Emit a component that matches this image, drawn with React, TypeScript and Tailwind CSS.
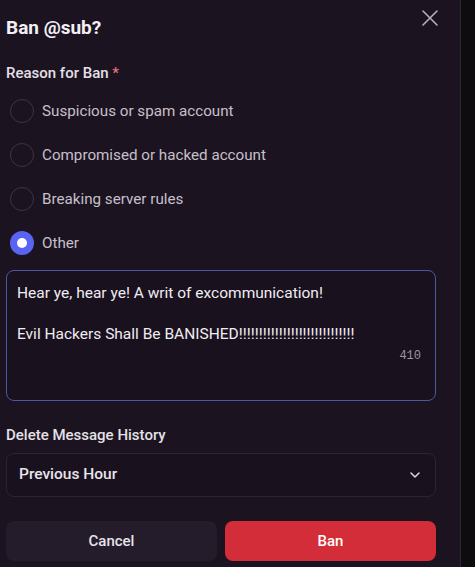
import { useState } from 'react';

const reasons = [
  'Suspicious or spam account',
  'Compromised or hacked account',
  'Breaking server rules',
  'Other',
];

export default function App() {
  const [selected, setSelected] = useState('Other');
  const [reason, setReason] = useState(
    'Hear ye, hear ye! A writ of excommunication!\n\nEvil Hackers Shall Be BANISHED!!!!!!!!!!!!!!!!!!!!!!!!!!!!!'
  );

  return (
    <div className="flex h-[567px] w-[475px] bg-[#0e0c0f]" style={{ fontFamily: 'Roboto, "Noto Sans", sans-serif' }}>
      <div className="relative flex w-[461px] flex-col border-r border-[#2e2833] bg-[#1c1321] pl-[6px] pr-[24px]">
        <button className="absolute right-[20px] top-[8px] text-[#b5afba]">
          <svg width="20" height="20" viewBox="0 0 20 20" fill="none" stroke="currentColor" strokeWidth="1.6" strokeLinecap="round">
            <path d="M3 3l14 14M17 3L3 17" />
          </svg>
        </button>

        <h1 className="mt-[15px] text-[19px] leading-[26px] font-bold text-[#f2f0f4]">Ban @sub?</h1>

        <div className="mt-[22px] text-[15px] leading-[20px] font-medium text-[#e4e1e7]">
          Reason for Ban <span className="text-[#e66d79]">*</span>
        </div>

        <div className="mt-[6px] flex flex-col">
          {reasons.map((r) => (
            <label key={r} className="flex h-[44px] cursor-pointer items-center gap-[8px] pl-[4px]" onClick={() => setSelected(r)}>
              {selected === r ? (
                <span className="flex h-[24px] w-[24px] items-center justify-center rounded-full bg-[#5865f2]">
                  <span className="h-[10px] w-[10px] rounded-full bg-white" />
                </span>
              ) : (
                <span className="h-[24px] w-[24px] rounded-full border border-[#3d3543]" />
              )}
              <span className="text-[15.2px] text-[#c6c0cb]">{r}</span>
            </label>
          ))}
        </div>

        <div className="relative mt-[5px] h-[131px] rounded-[8px] border border-[#4b58a6] bg-[#1a111f]">
          <textarea
            value={reason}
            onChange={(e) => setReason(e.target.value)}
            spellCheck={false}
            className="h-full w-full resize-none bg-transparent px-[10px] pt-[12px] text-[15.5px] leading-[20.5px] text-[#efedf1] outline-none"
          />
          <span className="absolute bottom-[35px] right-[14px] text-[12px] text-[#9b95a0]" style={{ fontFamily: '"Liberation Mono", monospace' }}>
            410
          </span>
        </div>

        <div className="mt-[24px] text-[15px] leading-[20px] font-medium text-[#e4e1e7]">Delete Message History</div>

        <div className="mt-[8px] flex h-[44px] items-center justify-between rounded-[8px] border border-[#2c2432] bg-[#1a111f] pl-[12px] pr-[12px]">
          <span className="text-[15.5px] font-medium text-[#e8e5eb]">Previous Hour</span>
          <svg width="16" height="16" viewBox="0 0 16 16" fill="none" stroke="#d5d0d9" strokeWidth="1.6" strokeLinecap="round" strokeLinejoin="round">
            <path d="M4 6l4 4 4-4" />
          </svg>
        </div>

        <div className="mt-[24px] flex gap-[8px]">
          <button className="h-[40px] flex-1 rounded-[8px] bg-[#241c2a] text-[15px] font-medium text-[#e6e3e9]">Cancel</button>
          <button className="h-[40px] flex-1 rounded-[8px] bg-[#d22d39] text-[15px] font-medium text-white">Ban</button>
        </div>
      </div>
      <div className="flex-1" />
    </div>
  );
}
